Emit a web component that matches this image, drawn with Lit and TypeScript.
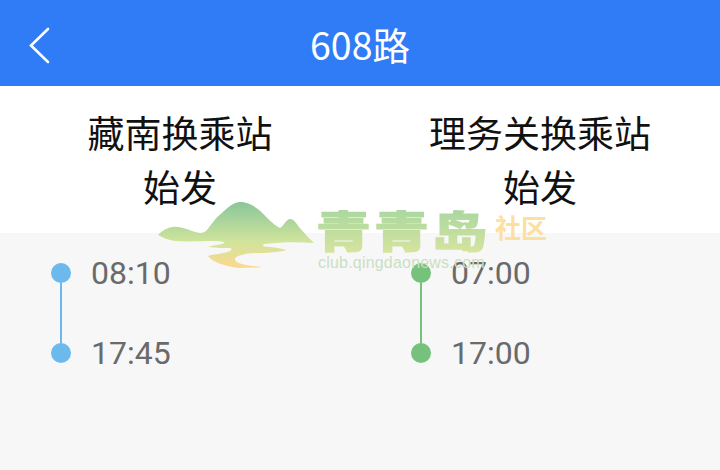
import { LitElement, html, css, svg } from 'lit';
import { customElement } from 'lit/decorators.js';

const routes = [
  { name: '藏南换乘站', times: ['08:10', '17:45'], color: '#6cb9ee' },
  { name: '理务关换乘站', times: ['07:00', '17:00'], color: '#76c17b' },
];

@customElement('app-root')
export class AppRoot extends LitElement {
  static styles = css`
    :host {
      display: block;
      width: 720px;
      height: 470px;
      position: relative;
      overflow: hidden;
      background: #f7f7f7;
      font-family: 'Noto Sans CJK SC', 'Noto Sans', sans-serif;
    }
    .bar {
      height: 86px;
      background: #2f7cf6;
      color: #fff;
      display: flex;
      align-items: center;
      justify-content: center;
      position: relative;
      font-size: 37.5px;
    }
    .back {
      position: absolute;
      left: 28px;
      top: 26px;
      width: 24px;
      height: 38px;
    }
    .heads {
      display: grid;
      grid-template-columns: 360px 360px;
      background: #fff;
      height: 147px;
      box-sizing: border-box;
      padding-top: 19px;
      text-align: center;
      font-size: 37px;
      line-height: 54px;
      color: #111;
    }
    .cols {
      display: grid;
      grid-template-columns: 360px 360px;
      padding-top: 30px;
    }
    .col {
      display: flex;
      padding-left: 51px;
      gap: 20px;
    }
    .track {
      display: flex;
      flex-direction: column;
      align-items: center;
      width: 20px;
    }
    .dot {
      width: 20px;
      height: 20px;
      border-radius: 50%;
    }
    .line {
      width: 2px;
      height: 60px;
    }
    .times {
      display: flex;
      flex-direction: column;
      gap: 30px;
      margin-top: -15px;
      font-family: Roboto, sans-serif;
      font-size: 32px;
      line-height: 50px;
      color: #6a6a6a;
    }
    .mark {
      position: absolute;
      left: 158px;
      top: 202px;
      width: 400px;
      height: 72px;
      pointer-events: none;
    }
    .mark svg {
      position: absolute;
      left: 0;
      top: 0;
    }
    .brand {
      position: absolute;
      left: 158px;
      top: 3px;
      font-size: 55px;
      line-height: 62px;
      font-weight: 900;
      letter-spacing: 3px;
      white-space: nowrap;
      transform: scaleY(0.78);
      transform-origin: 0 0;
      background: linear-gradient(#a6d6a0, #d6e49e);
      -webkit-background-clip: text;
      background-clip: text;
      color: transparent;
      -webkit-text-stroke: 1.5px transparent;
    }
    .tag {
      position: absolute;
      left: 337px;
      top: 9px;
      font-size: 26px;
      line-height: 32px;
      font-weight: 700;
      color: #fddf9f;
      white-space: nowrap;
    }
    .url {
      position: absolute;
      left: 160px;
      top: 51px;
      font-family: 'Liberation Sans', sans-serif;
      font-size: 16px;
      line-height: 20px;
      letter-spacing: 0.2px;
      color: #cbdfc2;
      white-space: nowrap;
    }
  `;

  private _logo() {
    return svg`
      <svg width="160" height="70" viewBox="0 0 160 70">
        <defs>
          <linearGradient id="hill" gradientUnits="userSpaceOnUse" x1="0" y1="0" x2="0" y2="66">
            <stop offset="0" stop-color="#8ac69b" />
            <stop offset="0.6" stop-color="#d0e49c" />
            <stop offset="1" stop-color="#fcd98e" />
          </linearGradient>
        </defs>
        <path fill="url(#hill)" d="M0 33 C5 28 9 26 14 25 C22 24 28 27 34 29 C40 31 44 32 48 29 C54 22 58 15 64 11 C70 5 76 0 82 0 C90 0 96 4 101 8 C108 14 115 23 122 26 C126 24 128 17 132 17 C136 17 138 21 141 25 C146 31 151 36 156 41 C140 40 122 40 107 42 C104 43 104 44 107 44.5 C114 45 122 46 129 48 C122 50 114 50 107 51 C98 51 90 51 84 53 C79 54 76 56 77 58 C78 60 80 61 84 62 C90 64 97 64 104 65 C96 66 88 66 80 66 C72 65 66 63 60 61 C56 59 52 57 50 54 C56 52 65 52 72 49 C74 48 74 46.5 72 46 C66 46 58 46 50 45 C56 43 62 43 67 41 C64 39 60 39 57 39 C44 39 30 40 17 39 C10 38 5 36 0 33 Z" />
      </svg>
    `;
  }

  render() {
    return html`
      <div class="bar">
        <svg class="back" viewBox="0 0 24 38" fill="none" stroke="#fff" stroke-width="2.6" stroke-linecap="round" stroke-linejoin="miter">
          <path d="M20 3 L3 19.5 L20 36" />
        </svg>
        608路
      </div>
      <div class="heads">
        ${routes.map(r => html`<div>${r.name}<br />始发</div>`)}
      </div>
      <div class="cols">
        ${routes.map(r => html`
          <div class="col">
            <div class="track">
              <div class="dot" style="background:${r.color}"></div>
              <div class="line" style="background:${r.color}"></div>
              <div class="dot" style="background:${r.color}"></div>
            </div>
            <div class="times">
              ${r.times.map(t => html`<div>${t}</div>`)}
            </div>
          </div>
        `)}
      </div>
      <div class="mark">
        ${this._logo()}
        <div class="brand">青青岛</div>
        <div class="tag">社区</div>
        <div class="url">club.qingdaonews.com</div>
      </div>
    `;
  }
}
